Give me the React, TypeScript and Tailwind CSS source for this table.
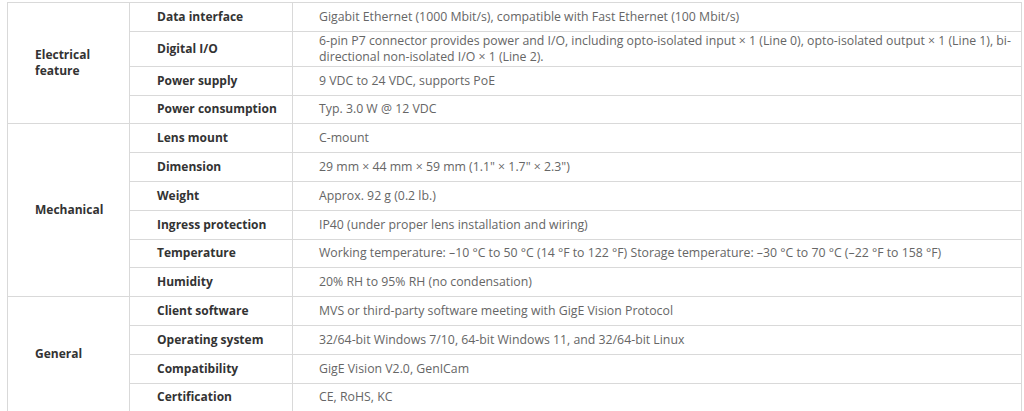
import { Fragment } from 'react'

interface SpecGroup {
  title: string[]
  rows: [string, string][]
}

const groups: SpecGroup[] = [
  {
    title: ['Electrical', 'feature'],
    rows: [
      ['Data interface', 'Gigabit Ethernet (1000 Mbit/s), compatible with Fast Ethernet (100 Mbit/s)'],
      ['Digital I/O', '6-pin P7 connector provides power and I/O, including opto-isolated input × 1 (Line 0), opto-isolated output × 1 (Line 1), bi-directional non-isolated I/O × 1 (Line 2).'],
      ['Power supply', '9 VDC to 24 VDC, supports PoE'],
      ['Power consumption', 'Typ. 3.0 W @ 12 VDC']
    ]
  },
  {
    title: ['Mechanical'],
    rows: [
      ['Lens mount', 'C-mount'],
      ['Dimension', '29 mm × 44 mm × 59 mm (1.1" × 1.7" × 2.3")'],
      ['Weight', 'Approx. 92 g (0.2 lb.)'],
      ['Ingress protection', 'IP40 (under proper lens installation and wiring)'],
      ['Temperature', 'Working temperature: –10 °C to 50 °C (14 °F to 122 °F) Storage temperature: –30 °C to 70 °C (–22 °F to 158 °F)'],
      ['Humidity', '20% RH to 95% RH (no condensation)']
    ]
  },
  {
    title: ['General'],
    rows: [
      ['Client software', 'MVS or third-party software meeting with GigE Vision Protocol'],
      ['Operating system', '32/64-bit Windows 7/10, 64-bit Windows 11, and 32/64-bit Linux'],
      ['Compatibility', 'GigE Vision V2.0, GenICam'],
      ['Certification', 'CE, RoHS, KC']
    ]
  }
]

export default function App() {
  return (
    <div className="h-[411px] overflow-hidden bg-white pl-[7px] pr-[2px] pt-[2px] font-['Open_Sans',sans-serif] text-[12px]">
      <table className="w-full table-fixed border-collapse">
        <colgroup>
          <col className="w-[122px]" />
          <col className="w-[163px]" />
          <col />
        </colgroup>
        <tbody>
          {groups.map(group => (
            <Fragment key={group.title.join(' ')}>
              {group.rows.map(([name, value], i) => (
                <tr key={name}>
                  {i === 0 && (
                    <td
                      className="border border-[#d9d9d9] pl-[27px] pr-2 align-middle font-bold leading-[16px] text-[#333]"
                      rowSpan={group.rows.length}
                    >
                      {group.title.map(line => (
                        <div key={line}>{line}</div>
                      ))}
                    </td>
                  )}
                  <td className="h-[28.8px] border border-[#d9d9d9] pl-[27px] pr-2 align-middle font-bold leading-[16px] text-[#333]">
                    {name}
                  </td>
                  <td className="h-[28.8px] border border-[#d9d9d9] py-[1px] pl-[26px] pr-[4px] align-middle text-[12.3px] leading-[16px] text-[#666]">
                    {value}
                  </td>
                </tr>
              ))}
            </Fragment>
          ))}
        </tbody>
      </table>
    </div>
  )
}
